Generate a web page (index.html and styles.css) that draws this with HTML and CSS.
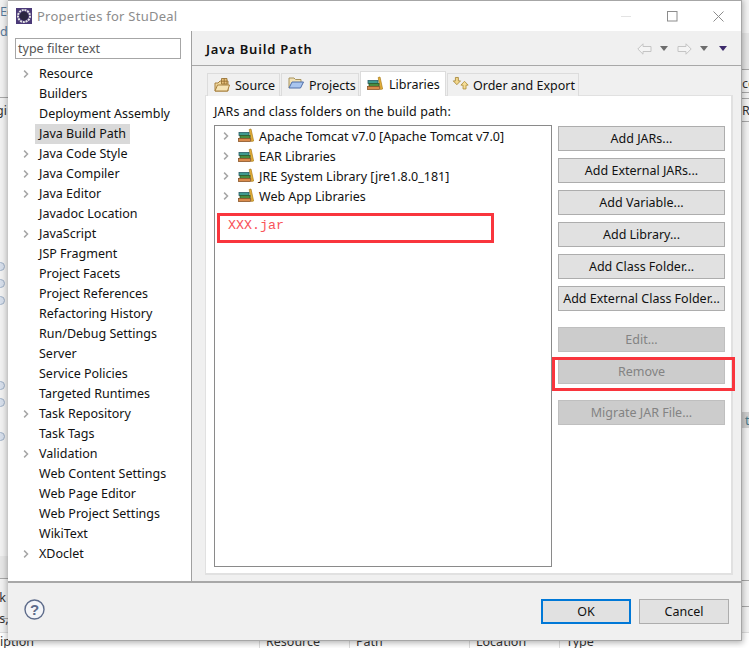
FILE: index.html
```html
<!DOCTYPE html>
<html lang="en">
<head>
<meta charset="utf-8">
<title>Properties for StuDeal</title>
<link rel="stylesheet" href="styles.css">
</head>
<body>
<svg class="defs" width="0" height="0" aria-hidden="true">
  <symbol id="lib" viewBox="0 0 16 16">
    <path d="M11.2 1.5 L13 1 L15.6 13 L13.4 13.5 Z" fill="#e8b23a" stroke="#a87a18" stroke-width=".7"/>
    <rect x="1" y="4.5" width="10" height="3" fill="#3f9a8f" stroke="#2a5c66" stroke-width=".8"/>
    <rect x="2" y="7.5" width="10" height="3" fill="#4b8c3f" stroke="#2f5a2a" stroke-width=".8"/>
    <rect x="0.5" y="10.5" width="12" height="3" fill="#d98a4a" stroke="#8a5528" stroke-width=".8"/>
  </symbol>
  <symbol id="chev" viewBox="0 0 8 12">
    <path d="M1.5 1.5 L6 6 L1.5 10.5" fill="none" stroke="#a6a6a6" stroke-width="2"/>
  </symbol>
</svg>

<div class="backdrop">
  <div class="bg-left">
    <span class="bg-frag bg-e">Ed</span>
    <span class="bg-frag bg-d">de</span>
    <span class="bg-rule r-l1"></span>
    <span class="bg-frag bg-gi">gi</span>
    <i class="bg-dot d1"></i><i class="bg-dot d2"></i><i class="bg-dot d3"></i><i class="bg-dot d4"></i><i class="bg-dot d5"></i><i class="bg-dot d6"></i>
    <span class="bg-band b-l"></span>
    <span class="bg-rule r-l2"></span>
    <span class="bg-frag bg-rk">rk</span>
    <span class="bg-rule r-l3"></span>
    <span class="bg-frag bg-rs">rs,</span>
  </div>
  <div class="bg-right">
    <span class="bg-band b-r1"></span>
    <span class="bg-rule r-r1"></span>
    <span class="bg-frag bg-cc">cc</span>
    <span class="bg-rule r-r2"></span>
    <span class="bg-rule r-r3"></span>
    <span class="bg-frag bg-re">Re</span>
    <span class="bg-rule r-r4"></span>
    <span class="bg-band b-r2"></span>
    <span class="bg-frag bg-t">t</span>
    <span class="bg-rule r-r5"></span>
    <span class="bg-rule r-r6"></span>
  </div>
  <div class="bg-table">
    <span class="col c1">iption</span>
    <span class="col c2">Resource</span>
    <span class="col c3">Path</span>
    <span class="col c4">Location</span>
    <span class="col c5">Type</span>
  </div>
</div>

<main class="dialog">
  <header class="titlebar">
    <svg class="app-icon" width="16" height="16" viewBox="0 0 16 16">
      <rect width="16" height="16" fill="#4b3a78"/>
      <circle cx="8" cy="8" r="6" fill="none" stroke="#e4e4e4" stroke-width="2" stroke-dasharray="2 .8"/>
      <circle cx="8" cy="8" r="4.4" fill="#2b2740"/>
    </svg>
    <span class="title">Properties for StuDeal</span>
    <div class="winctl">
      <span class="ctl"><svg width="10" height="10" viewBox="0 0 10 10"><path d="M0 5.5H10" stroke="#e3e3e3"/></svg></span>
      <span class="ctl"><svg width="11" height="11" viewBox="0 0 11 11"><rect x=".5" y=".5" width="9.5" height="9.5" fill="none" stroke="#8c8c8c"/></svg></span>
      <span class="ctl"><svg width="11" height="11" viewBox="0 0 11 11"><path d="M.5 .5L10.5 10.5M10.5 .5L.5 10.5" stroke="#8c8c8c"/></svg></span>
    </div>
  </header>

  <div class="body">
    <aside class="side">
      <div class="filter">type filter text</div>
      <ul class="nav">
        <li class="item"><svg class="chev"><use href="#chev"/></svg>Resource</li>
        <li class="item">Builders</li>
        <li class="item">Deployment Assembly</li>
        <li class="item"><span class="sel">Java Build Path</span></li>
        <li class="item"><svg class="chev"><use href="#chev"/></svg>Java Code Style</li>
        <li class="item"><svg class="chev"><use href="#chev"/></svg>Java Compiler</li>
        <li class="item"><svg class="chev"><use href="#chev"/></svg>Java Editor</li>
        <li class="item">Javadoc Location</li>
        <li class="item"><svg class="chev"><use href="#chev"/></svg>JavaScript</li>
        <li class="item">JSP Fragment</li>
        <li class="item">Project Facets</li>
        <li class="item">Project References</li>
        <li class="item">Refactoring History</li>
        <li class="item">Run/Debug Settings</li>
        <li class="item">Server</li>
        <li class="item">Service Policies</li>
        <li class="item">Targeted Runtimes</li>
        <li class="item"><svg class="chev"><use href="#chev"/></svg>Task Repository</li>
        <li class="item">Task Tags</li>
        <li class="item"><svg class="chev"><use href="#chev"/></svg>Validation</li>
        <li class="item">Web Content Settings</li>
        <li class="item">Web Page Editor</li>
        <li class="item">Web Project Settings</li>
        <li class="item">WikiText</li>
        <li class="item"><svg class="chev"><use href="#chev"/></svg>XDoclet</li>
      </ul>
    </aside>

    <section class="content">
      <div class="pagehead">
        <h1 class="pagetitle">Java Build Path</h1>
        <div class="navtools">
          <svg width="15" height="12" viewBox="0 0 15 12"><path d="M.8 6L6 .8V3.5H14V8.5H6V11.2Z" fill="#f4f4f4" stroke="#c4c4c4"/></svg>
          <i class="tri tri-g t-a"></i>
          <svg class="fwd" width="15" height="12" viewBox="0 0 15 12"><path d="M14.2 6L9 .8V3.5H1V8.5H9V11.2Z" fill="#f4f4f4" stroke="#c4c4c4"/></svg>
          <i class="tri tri-g t-b"></i>
          <i class="tri tri-p"></i>
        </div>
      </div>

      <div class="tabsarea">
        <div class="tabs">
          <div class="tab t-source">
            <svg width="16" height="16" viewBox="0 0 16 16"><path d="M1 14V6H4L6 4H14V14Z" fill="#f0d9a0" stroke="#a8803c"/><path d="M1 14L3.5 8H15.5L13.5 14Z" fill="#f6e4b6" stroke="#a8803c"/><path d="M7.5 1.5H13V7H7.5ZM10.2 1.5V7M7.5 4.2H13" fill="#e9c27e" stroke="#8f6a2c" stroke-width=".8"/></svg>
            Source
          </div>
          <div class="tab t-projects">
            <svg class="raised" width="16" height="16" viewBox="0 0 16 16"><path d="M1 13V3H6L7.5 4.5H13V7" fill="#f3e3b8" stroke="#a8935c"/><path d="M1 13L4 7H15.5L12.5 13Z" fill="#a9c5ee" stroke="#4f6fa8"/></svg>
            Projects
          </div>
          <div class="tab tab-active t-libs">
            <svg width="16" height="16"><use href="#lib"/></svg>
            Libraries
          </div>
          <div class="tab t-order">
            <svg class="raised" width="17" height="14" viewBox="0 0 20 16"><path d="M4 1.5H7.5V5.5H10L5.7 10L1.5 5.5H4Z" fill="#f3d78c" stroke="#a58638"/><path d="M13 15H16.5V10.5H19L14.7 6L10.5 10.5H13Z" fill="#f5dd96" stroke="#b08f3a"/></svg>
            Order and Export
          </div>
        </div>

        <div class="panel">
          <p class="panel-label">JARs and class folders on the build path:</p>
          <div class="panel-main">
            <div class="libtree">
              <div class="lib"><svg class="chev"><use href="#chev"/></svg><svg class="libicon"><use href="#lib"/></svg>Apache Tomcat v7.0 [Apache Tomcat v7.0]</div>
              <div class="lib"><svg class="chev"><use href="#chev"/></svg><svg class="libicon"><use href="#lib"/></svg>EAR Libraries</div>
              <div class="lib"><svg class="chev"><use href="#chev"/></svg><svg class="libicon"><use href="#lib"/></svg>JRE System Library [jre1.8.0_181]</div>
              <div class="lib"><svg class="chev"><use href="#chev"/></svg><svg class="libicon"><use href="#lib"/></svg>Web App Libraries</div>
              <div class="jar">XXX.jar</div>
            </div>
            <div class="actions">
              <button class="btn">Add JARs...</button>
              <button class="btn">Add External JARs...</button>
              <button class="btn">Add Variable...</button>
              <button class="btn">Add Library...</button>
              <button class="btn">Add Class Folder...</button>
              <button class="btn">Add External Class Folder...</button>
              <button class="btn off gap-a">Edit...</button>
              <button class="btn off">Remove</button>
              <button class="btn off gap-b">Migrate JAR File...</button>
              <span class="redbox-remove"></span>
            </div>
          </div>
        </div>
      </div>
    </section>
  </div>

  <footer class="foot">
    <svg class="help" width="21" height="21" viewBox="0 0 21 21"><circle cx="10.5" cy="10.5" r="9.5" fill="#f4f5f8" stroke="#5d6b8a" stroke-width="1.4"/><text x="10.5" y="15.5" text-anchor="middle" class="helpq">?</text></svg>
    <div class="foot-btns">
      <button class="fbtn primary">OK</button>
      <button class="fbtn">Cancel</button>
    </div>
  </footer>
</main>
</body>
</html>
```
FILE: styles.css
```css
* { box-sizing: border-box; }
html, body { margin: 0; height: 100%; }
body {
  width: 749px;
  height: 648px;
  position: relative;
  overflow: hidden;
  background: #f0f0f0;
  font-family: "Noto Sans", "Open Sans", sans-serif;
  font-size: 12.5px;
  color: #111;
}
.defs { position: absolute; }

/* Eclipse workbench peeking out behind the dialog */
.backdrop { position: absolute; inset: 0; color: #333; }
.bg-left { position: absolute; left: 0; top: 0; width: 8px; height: 648px; background: #f1f1f1; }
.bg-right { position: absolute; left: 741px; top: 0; width: 8px; height: 648px; background: #f3f3f3; }
.bg-frag { position: absolute; white-space: nowrap; }
.bg-e { left: 0; top: 3px; color: #5a7a9a; }
.bg-d { left: 0; top: 23px; color: #5a7a9a; }
.bg-gi { left: -4px; top: 102px; }
.bg-rk { left: -6px; top: 589px; }
.bg-rs { left: -6px; top: 610px; }
.bg-cc { left: 1px; top: 75px; }
.bg-re { left: 1px; top: 102px; }
.bg-t { left: 4px; top: 412px; color: #4a7a8a; }
.bg-rule { position: absolute; left: 0; width: 8px; height: 1px; background: #a8a8a8; }
.r-l1 { top: 97px; }
.r-l2 { top: 578px; }
.r-l3 { top: 618px; }
.r-r1 { top: 69px; }
.r-r2 { top: 92px; }
.r-r3 { top: 98px; }
.r-r4 { top: 121px; }
.r-r5 { top: 580px; }
.r-r6 { top: 606px; }
.bg-band { position: absolute; left: 0; width: 8px; }
.b-l { top: 556px; height: 22px; background: #e6e6e6; }
.b-r1 { top: 33px; height: 36px; background: #e6e6e6; }
.b-r2 { top: 412px; height: 16px; background: #cfcfcf; }
.bg-dot { position: absolute; left: -4px; width: 9px; height: 9px; border-radius: 50%; background: #d6deea; border: 1px solid #9fb0c6; }
.d1 { top: 262px; } .d2 { top: 279px; } .d3 { top: 296px; }
.d4 { top: 381px; } .d5 { top: 398px; } .d6 { top: 432px; }
.bg-table { position: absolute; left: 0; top: 632px; width: 749px; height: 16px; background: #fff; border-top: 1px solid #ddd; }
.col { position: absolute; top: 0; height: 16px; padding-left: 6px; border-left: 1px solid #ddd; white-space: nowrap; }
.c1 { left: -6px; border: 0; padding-left: 6px; }
.c2 { left: 259px; } .c3 { left: 349px; } .c4 { left: 469px; } .c5 { left: 559px; }

/* Dialog */
.dialog {
  position: absolute;
  left: 8px;
  top: 0;
  width: 734px;
  height: 641px;
  display: flex;
  flex-direction: column;
  background: #f0f0f0;
  border-top: 1px solid #a6a6a6;
  border-right: 1px solid #a6a6a6;
  border-bottom: 1px solid #a6a6a6;
  box-shadow: 0 1px 6px 1px rgba(0,0,0,.3);
}
.titlebar { height: 30px; background: #fff; display: flex; align-items: center; padding-left: 8px; flex: none; }
.app-icon { flex: none; }
.title { margin-left: 5px; font-size: 13px; color: #8c8c8c; letter-spacing: .25px; }
.winctl { margin-left: auto; display: flex; }
.ctl { width: 46px; display: flex; justify-content: center; align-items: center; }

.body { flex: 1; display: flex; min-height: 0; }
.side { width: 184px; flex: none; background: #fff; border-right: 1px solid #a0a0a0; padding: 7px 0 0 7px; }
.filter { width: 166px; height: 21px; border: 1px solid #a6a6a6; padding-left: 2px; line-height: 20px; color: #555; }
.nav { list-style: none; margin: 5px 0 0; padding: 0 0 0 24px; position: relative; }
.item { height: 20px; line-height: 20px; padding-left: 0; position: relative; white-space: nowrap; }
.sel { display: inline-block; height: 20px; background: #d9d9d9; margin-left: -4px; padding: 0 4px; }
.chev { width: 6px; height: 10px; position: absolute; left: -16px; top: 5px; }

.content { flex: 1; display: flex; flex-direction: column; min-width: 0; }
.pagehead { height: 35px; flex: none; display: flex; align-items: center; justify-content: space-between; padding: 1px 13px 0 14px; border-bottom: 1px solid #a8a8a8; }
.pagetitle { margin: 0; font-size: 13px; font-weight: 600; letter-spacing: .8px; color: #111; }
.navtools { display: flex; align-items: center; position: relative; width: 91px; height: 12px; }
.navtools .fwd { margin-left: 25px; }
.tri { position: absolute; top: 3px; width: 0; height: 0; border-left: 4px solid transparent; border-right: 4px solid transparent; border-top: 5px solid #6d6d6d; }
.t-a { left: 23px; }
.t-b { left: 63px; }
.tri-p { left: 82px; border-top-color: #3c2a6b; }

.tabsarea { flex: 1; padding: 5px 8px 6px 13px; display: flex; flex-direction: column; min-height: 0; }
.tabs { display: flex; height: 25px; flex: none; align-items: flex-end; position: relative; z-index: 1; padding-left: 2px; margin-bottom: -1px; }
.tab { height: 23px; background: #f0f0f0; border: 1px solid #dcdcdc; border-bottom: 0; display: flex; align-items: center; gap: 5px; padding-left: 6px; margin-right: 1px; }
.t-source { width: 73px; }
.t-projects { width: 78px; }
.t-libs { width: 86px; gap: 6px; }
.t-order { width: 132px; gap: 4px; padding-left: 4px; }
.raised { position: relative; top: -2px; }
.tab-active { height: 25px; background: #fff; align-items: center; padding-top: 0; }
.panel { flex: 1; background: #fff; border: 2px solid #e1e1e1; border-width: 1px 2px 2px 1px; padding: 8px 6px 6px 8px; display: flex; flex-direction: column; min-height: 0; }
.panel-label { margin: 0 0 5px; line-height: 16px; height: 16px; letter-spacing: .07px; }
.panel-main { flex: 1; display: flex; min-height: 0; }
.libtree { width: 338px; border: 1px solid #8a8a8a; padding: 0; flex: none; position: relative; }
.lib { height: 20px; display: flex; align-items: center; padding-left: 8px; white-space: nowrap; }
.lib .chev { position: static; flex: none; margin-right: 9px; }
.libicon { width: 16px; height: 16px; margin-right: 5px; flex: none; }
.jar {
  position: absolute;
  left: 2px;
  top: 87px;
  width: 277px;
  height: 30px;
  border: 3px solid #f9353d;
  padding-left: 8px;
  font-family: "Liberation Mono", monospace;
  font-size: 13.33px;
  line-height: 20px;
  color: #f9535a;
}
.actions { margin-left: 6px; width: 168px; display: flex; flex-direction: column; gap: 7px; position: relative; padding-top: 1px; }
.btn {
  height: 25px;
  flex: none;
  padding: 0;
  background: #e1e1e1;
  border: 1px solid #adadad;
  border-radius: 0;
  font: inherit;
  color: #111;
}
.btn.off { background: #cccccc; border-color: #bfbfbf; color: #838383; }
.gap-a { margin-top: 9px; }
.gap-b { margin-top: 9px; }
.redbox-remove { position: absolute; left: -6px; top: 232px; width: 183px; height: 34px; border: 3px solid #f9353d; pointer-events: none; }

.foot { height: 59px; flex: none; border-top: 2px solid #a8a8a8; background: #f0f0f0; display: flex; align-items: flex-start; justify-content: space-between; padding: 16px 12px 0 16px; }
.help { margin-top: 0; }
.helpq { font-family: "Liberation Sans", sans-serif; font-size: 15px; font-weight: 700; fill: #5d6b8a; }
.foot-btns { display: flex; gap: 8px; }
.fbtn { width: 90px; height: 25px; background: #e1e1e1; border: 1px solid #adadad; font: inherit; padding: 0; color: #111; }
.fbtn.primary { border: 2px solid #0078d7; }
```
